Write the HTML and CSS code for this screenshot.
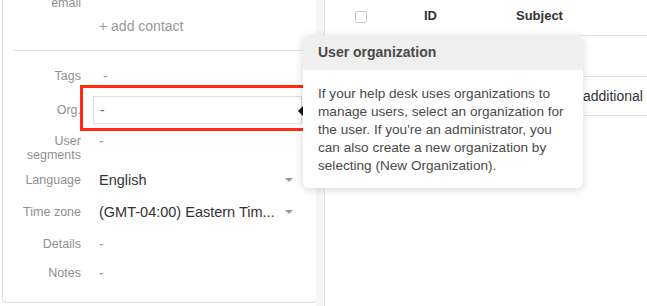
FILE: index.html
```html
<!DOCTYPE html>
<html lang="en">
<head>
    <meta charset="UTF-8">
    <meta name="viewport" content="width=device-width, initial-scale=1.0">
    <title>User profile</title>
    <link rel="stylesheet" href="styles.css">
</head>
<body>

    <div class="page">

        <!-- User details sidebar -->
        <aside class="sidebar">
            <div class="panel">
                <div class="row row-email">
                    <span class="label">email</span>
                </div>
                <div class="row row-add">
                    <span class="label"></span>
                    <span class="add-contact">+ add contact</span>
                </div>

                <div class="divider"></div>

                <div class="row row-tags">
                    <span class="label">Tags</span>
                    <span class="value muted tag-dash">-</span>
                </div>

                <div class="row row-org">
                    <span class="label">Org.</span>
                    <div class="value">
                        <div class="org-input">-</div>
                    </div>
                    <div class="highlight"></div>
                </div>

                <div class="row row-segments">
                    <span class="label">User<br>segments</span>
                    <span class="value muted">-</span>
                </div>

                <div class="row row-language">
                    <span class="label">Language</span>
                    <div class="value select">
                        <span>English</span>
                        <span class="caret"></span>
                    </div>
                </div>

                <div class="row row-timezone">
                    <span class="label">Time zone</span>
                    <div class="value select">
                        <span>(GMT-04:00) Eastern Tim...</span>
                        <span class="caret"></span>
                    </div>
                </div>

                <div class="row row-details">
                    <span class="label">Details</span>
                    <span class="value muted">-</span>
                </div>

                <div class="row row-notes">
                    <span class="label">Notes</span>
                    <span class="value muted">-</span>
                </div>
            </div>
        </aside>

        <div class="gutter"></div>

        <!-- Tickets table -->
        <main class="content">
            <table class="tickets">
                <thead>
                    <tr>
                        <th class="col-check"><span class="checkbox"></span></th>
                        <th class="col-id">ID</th>
                        <th class="col-subject">Subject</th>
                    </tr>
                </thead>
                <tbody>
                    <tr class="first">
                        <td class="col-check"></td>
                        <td class="col-id"></td>
                        <td class="col-subject"></td>
                    </tr>
                    <tr class="second">
                        <td class="col-check"></td>
                        <td class="col-id"></td>
                        <td class="col-subject"><div class="subject-text">Adding an additional contact</div></td>
                    </tr>
                </tbody>
            </table>
        </main>

        <!-- Help tooltip for the organization field -->
        <div class="tooltip">
            <span class="tooltip-arrow"></span>
            <div class="tooltip-title">User organization</div>
            <div class="tooltip-body">
                If your help desk uses organizations to<br>
                manage users, select an organization for<br>
                the user. If you're an administrator, you<br>
                can also create a new organization by<br>
                selecting (New Organization).
            </div>
        </div>

    </div>

</body>
</html>
```

FILE: styles.css
```css
body {
    margin: 0;
    background: #fff;
    font-family: "Liberation Sans", Arial, sans-serif;
    color: #333;
    overflow: hidden;
}
.page {
    position: relative;
    display: flex;
    height: 306px;
}
.sidebar {
    width: 316px;
    padding-left: 2px;
    box-sizing: border-box;
    flex-shrink: 0;
}
.panel {
    margin-top: -10px;
    height: 313px;
    box-sizing: border-box;
    border: 1px solid #dcdcdc;
    border-radius: 4px;
    background: #fff;
    width: 315px;
}
.row {
    display: flex;
    align-items: center;
}
.label {
    width: 78px;
    flex-shrink: 0;
    text-align: right;
    font-size: 12.5px;
    line-height: 14px;
    color: #8f8f8f;
    margin-right: 18px;
}
.value {
    flex: 1;
    font-size: 14px;
    color: #333;
}
.muted {
    color: #999;
}
.tag-dash {
    padding-left: 4px;
}
.add-contact {
    font-size: 14px;
    color: #999;
}
.row-email {
    height: 24px;
}
.row-add {
    height: 22px;
}
.divider {
    height: 1px;
    background: #e2e2e2;
    margin: 13px 0 12px 10px;
}
.row-tags {
    height: 26px;
}
.row-org {
    position: relative;
    height: 42px;
}
.org-input {
    margin-left: -6px;
    width: 209px;
    height: 28px;
    box-sizing: border-box;
    border: 1px solid #e0e0e0;
    padding-left: 6px;
    line-height: 26px;
    color: #666;
}
.highlight {
    position: absolute;
    left: 77px;
    right: -1px;
    top: -4px;
    bottom: 0;
    border: 3px solid #ff2a12;
}
.row-segments {
    align-items: flex-start;
    height: 34px;
    padding-top: 3px;
    box-sizing: border-box;
}
.row-segments .value {
    line-height: 14px;
}
.row-language {
    height: 29px;
}
.row-timezone {
    height: 36px;
}
.row-details {
    height: 27px;
}
.row-notes {
    height: 32px;
}
.select {
    display: flex;
    justify-content: space-between;
    align-items: center;
    padding-right: 23px;
    font-size: 14.5px;
}
.caret {
    width: 0;
    height: 0;
    border-left: 4px solid transparent;
    border-right: 4px solid transparent;
    border-top: 4px solid #999;
}
.gutter {
    width: 8px;
    flex-shrink: 0;
    background: #f6f6f6;
    border-right: 1px solid #e3e3e3;
}
.content {
    flex: 1;
    min-width: 0;
    overflow: hidden;
}
.tickets {
    width: 100%;
    table-layout: fixed;
    border-collapse: collapse;
    font-size: 13px;
}
.tickets th {
    height: 35px;
    padding: 0 0 4px 0;
    box-sizing: border-box;
    text-align: left;
    font-weight: bold;
    color: #333;
    border-bottom: 1px solid #e2e2e2;
}
.tickets td {
    padding: 0;
    font-size: 14px;
    color: #333;
    border-bottom: 1px solid #e2e2e2;
}
.tickets tr.first td {
    height: 40px;
}
.tickets tr.second td {
    height: 38px;
}
.subject-text {
    white-space: nowrap;
    overflow: hidden;
}
.col-check {
    width: 99px;
}
.col-id {
    width: 92px;
}
.checkbox {
    display: block;
    margin-left: 30px;
    margin-top: 3px;
    width: 12px;
    height: 12px;
    border: 1px solid #c8c8c8;
    border-radius: 2px;
    box-sizing: border-box;
    background: #fff;
}
.tooltip {
    position: absolute;
    left: 303px;
    top: 35px;
    width: 280px;
    background: #fff;
    border-radius: 6px;
    box-shadow: 0 2px 8px rgba(0, 0, 0, 0.16);
}
.tooltip-arrow {
    position: absolute;
    left: -5px;
    top: 71px;
    width: 0;
    height: 0;
    border-top: 5px solid transparent;
    border-bottom: 5px solid transparent;
    border-right: 5px solid #111;
}
.tooltip-title {
    height: 35px;
    line-height: 35px;
    padding-left: 15px;
    background: #efefef;
    border-radius: 6px 6px 0 0;
    font-size: 14px;
    font-weight: bold;
    color: #4a4a4a;
}
.tooltip-body {
    padding: 15px 15px 13px 15px;
    font-size: 13.6px;
    line-height: 18px;
    color: #4a4a4a;
    white-space: nowrap;
}
```
